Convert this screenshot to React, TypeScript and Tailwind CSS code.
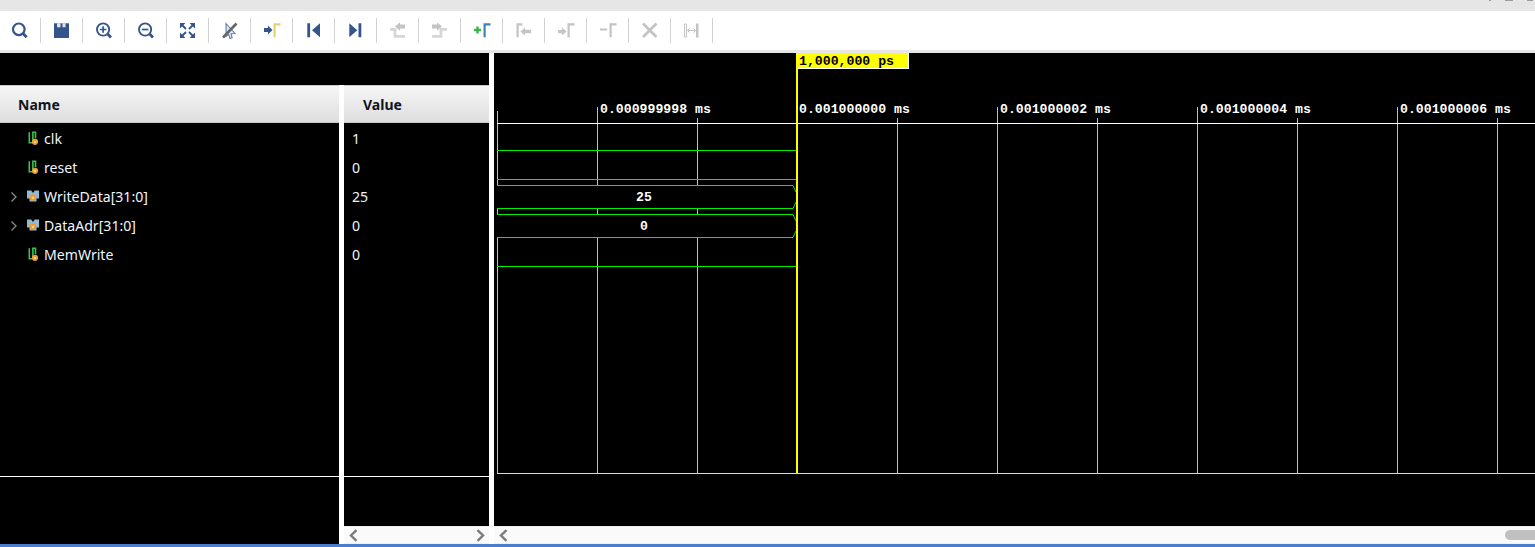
import type { ReactNode } from "react";

const BLUE = "#34558b";
const GRAY = "#c4c4c4";

// every toolbar icon sits on a 24x24 box centred in its button
function Glyph({ children }: { children: ReactNode }) {
  return (
    <svg width="24" height="24" viewBox="-0.5 -0.5 24 24" fill="none">
      {children}
    </svg>
  );
}

function Marker({ color, x = 14 }: { color: string; x?: number }) {
  return <path d={`M${x} 4.8h7v2.200h-4.800v11.800H${x}z`} fill={color} />;
}

const toolbarIcons: ReactNode[] = [
  <Glyph key="search">
    <circle cx="11.3" cy="10.8" r="5.8" stroke={BLUE} strokeWidth="2.200" />
    <path d="M15.500 15L19.200 18.800" stroke={BLUE} strokeWidth="2.800" />
  </Glyph>,
  <Glyph key="save">
    <path d="M4.500 4.800h15v14.700h-15z" fill={BLUE} />
    <path d="M7.500 4.800h3.500v4h-3.500zM13 4.800h3v4h-3z" fill="#dfe5ef" />
  </Glyph>,
  <Glyph key="zoom-in">
    <circle cx="11.600" cy="11" r="6.100" stroke={BLUE} strokeWidth="1.900" />
    <path d="M8.300 11h6.600M11.600 7.700v6.600" stroke={BLUE} strokeWidth="1.700" />
    <path d="M16.200 15.600L19.500 19" stroke={BLUE} strokeWidth="2.800" />
  </Glyph>,
  <Glyph key="zoom-out">
    <circle cx="11.600" cy="11" r="6.100" stroke={BLUE} strokeWidth="1.900" />
    <path d="M8.300 11h6.600" stroke={BLUE} strokeWidth="1.700" />
    <path d="M16.200 15.600L19.500 19" stroke={BLUE} strokeWidth="2.800" />
  </Glyph>,
  <Glyph key="fit">
    <path d="M4.500 4.500h5.500l-5.500 5.500zM19.500 4.500h-5.500l5.500 5.500zM4.500 19.500h5.500l-5.500-5.500zM19.500 19.500h-5.500l5.500-5.500z" fill={BLUE} />
    <path d="M6 6l4.500 4.500M18 6l-4.500 4.500M6 18l4.500-4.500M18 18l-4.500-4.500" stroke={BLUE} strokeWidth="1.800" />
  </Glyph>,
  <Glyph key="cursor">
    <path d="M8.500 5L17.500 15l-3.800.3.900 4-2.200.6-1.200-4-2.600 2z" fill="#dfe8f2" stroke="#5b7fae" strokeWidth="1.100" />
    <path d="M19 5L5.500 19" stroke="#666666" strokeWidth="2.600" />
  </Glyph>,
  <Glyph key="go-marker">
    <path d="M4.500 9.500h4V7l4.500 4.500L8.500 16v-2.500h-4z" fill={BLUE} />
    <Marker color="#e9d077" />
  </Glyph>,
  <Glyph key="start">
    <path d="M5.800 4.800h2.800v14H5.800zM18.500 4.800v14l-8-7z" fill={BLUE} />
  </Glyph>,
  <Glyph key="end">
    <path d="M5.800 4.800l8 7-8 7zM15 4.800h2.800v14H15z" fill={BLUE} />
  </Glyph>,
  <Glyph key="swap-up">
    <path d="M19.500 6h-5V3.800L9.500 8l5 4.200V10h5z" fill={GRAY} />
    <path d="M4.500 10.800H9.500V17.800H19.500" stroke="#d6d6d6" strokeWidth="2.800" />
  </Glyph>,
  <Glyph key="swap-down">
    <path d="M4.500 6h5V3.800l5 4.200-5 4.200V10h-5z" fill={GRAY} />
    <path d="M4.500 17.800H13.500V10.800H19.500" stroke="#d6d6d6" strokeWidth="2.800" />
  </Glyph>,
  <Glyph key="add-marker">
    <path d="M4.500 11.500h7M8 8v7" stroke="#3fb24a" strokeWidth="2.400" />
    <Marker color="#3f83b8" />
  </Glyph>,
  <Glyph key="prev-marker">
    <path d="M5 4.800h6v2.200H7.200v11.800H5z" fill={GRAY} />
    <path d="M9 13l4.500-4v2.200h6v3.600h-6V17z" fill={GRAY} />
  </Glyph>,
  <Glyph key="next-marker">
    <path d="M4.500 11.500h4V9l4.500 4-4.500 4v-2.200h-4z" fill={GRAY} />
    <Marker color={GRAY} />
  </Glyph>,
  <Glyph key="remove-marker">
    <path d="M4.500 11h7.200" stroke={GRAY} strokeWidth="2" />
    <Marker color={GRAY} />
  </Glyph>,
  <Glyph key="remove-all">
    <path d="M5.500 5l13.500 13.500M19 5L5.500 18.500" stroke={GRAY} strokeWidth="2.800" />
  </Glyph>,
  <Glyph key="span">
    <path d="M5 5.500h2v13H5z" stroke={GRAY} strokeWidth="1" />
    <path d="M16.500 5H19v14h-2.500z" fill={GRAY} />
    <path d="M8 12h8M10 10l-2 2 2 2M14 10l2 2-2 2" stroke={GRAY} strokeWidth="1" />
  </Glyph>,
];

type Signal = { name: string; value: string; bus?: boolean };

const signals: Signal[] = [
  { name: "clk", value: "1" },
  { name: "reset", value: "0" },
  { name: "WriteData[31:0]", value: "25", bus: true },
  { name: "DataAdr[31:0]", value: "0", bus: true },
  { name: "MemWrite", value: "0" },
];

function SignalIcon({ bus }: { bus?: boolean }) {
  return (
    <svg width="14" height="16" viewBox="0 0 14 16" fill="none" className="shrink-0">
      {bus ? (
        <path d="M0 1.500h4.200l1.800 2.500 1.800-2.500H12v8H9.500v3h-7v-3H0z" fill="#8fbbd8" />
      ) : (
        <path d="M2.300 1.200v10.600h3.600V1.200h2.600v6" stroke="#3cc24f" strokeWidth="1.600" />
      )}
      <circle cx={bus ? 6 : 8} cy={bus ? 8.500 : 10.800} r={bus ? 3.300 : 3.100} fill="#ef9a2e" />
      <path d={bus ? "M4.900 7.600L6 9.800 7.100 7.600" : "M6.900 9.900L8 12.100 9.100 9.900"} stroke="#fff3dc" strokeWidth="0.800" />
    </svg>
  );
}

function HeaderCell({ label, pad }: { label: string; pad: string }) {
  return (
    <div className={`h-[38px] shrink-0 flex items-center ${pad} border-y border-[#c9c9c9] bg-gradient-to-b from-[#f6f6f6] to-[#dedee0] text-[14px] font-bold text-[#10141c]`}>
      {label}
    </div>
  );
}

function ScrollChevron({ right }: { right?: boolean }) {
  return (
    <svg width="9" height="13" viewBox="0 0 9 13" fill="none">
      <path d={right ? "M1.500 1.200L7 6.500l-5.500 5.300" : "M7.500 1.200L2 6.500l5.500 5.300"} stroke="#7b7b7b" strokeWidth="2.400" />
    </svg>
  );
}

// page coordinates minus the wave panel's origin (494, 53)
const px = (x: number) => x - 494;
const py = (y: number) => y - 53;

const majorTicks = [597, 997, 1197, 1397];
const minorTicks = [697, 897, 1097, 1297, 1497];
const rulerLabels = [
  { x: 600, text: "0.000999998 ms" },
  { x: 799, text: "0.001000000 ms" },
  { x: 1000, text: "0.001000002 ms" },
  { x: 1200, text: "0.001000004 ms" },
  { x: 1400, text: "0.001000006 ms" },
];
const digitalLines = [150, 179, 266];
const busRows = [
  { top: 185, bottom: 208, label: "25", base: 201 },
  { top: 214, bottom: 237, label: "0", base: 230 },
];

function WaveCanvas() {
  const mono = { fontFamily: '"Liberation Mono", monospace', fontWeight: 700, fontSize: 13.2 };
  return (
    <svg className="absolute inset-0" width="1041" height="473" viewBox="0 0 1041 473">
      <g shapeRendering="crispEdges">
        <path d={`M${px(497) + 0.5} ${py(111)}V${py(473)}`} stroke="#c0c0c0" />
        {majorTicks.map((x) => (
          <path key={x} d={`M${px(x) + 0.5} ${py(107)}V${py(473)}`} stroke="#c0c0c0" />
        ))}
        {minorTicks.map((x) => (
          <path key={x} d={`M${px(x) + 0.5} ${py(118)}V${py(473)}`} stroke="#c0c0c0" />
        ))}
        <path d={`M${px(497)} ${py(123) + 0.5}H1041`} stroke="#ffffff" />
        <path d={`M${px(497)} ${py(473) + 0.5}H1041`} stroke="#d8d8d8" />
        {digitalLines.map((y) => (
          <path key={y} d={`M${px(497)} ${py(y) + 0.5}H${px(797)}`} stroke="#00f000" />
        ))}
      </g>
      {busRows.map((row) => (
        <g key={row.label}>
          <rect x={px(497)} y={py(row.top)} width={300} height={row.bottom - row.top} fill="#000000" />
          <path
            d={`M${px(497)} ${py(row.top) + 0.5}H${px(793)}L${px(796)} ${py(row.top) + 7}M${px(796)} ${py(row.bottom) - 6}L${px(793)} ${py(row.bottom) + 0.5}H${px(497)}`}
            stroke="#00f000"
          />
          <text x={px(644)} y={py(row.base)} textAnchor="middle" fill="#ffffff" style={mono}>
            {row.label}
          </text>
        </g>
      ))}
      {rulerLabels.map((label) => (
        <text key={label.x} x={px(label.x)} y={py(113)} fill="#ffffff" style={mono}>
          {label.text}
        </text>
      ))}
      <g shapeRendering="crispEdges">
        <rect x={px(796)} y="0" width="2" height={py(473)} fill="#ffff00" />
        <rect x={px(797)} y="0" width="112" height="16" fill="#ffffff" />
        <rect x={px(797)} y="0" width="111" height="15" fill="#ffff00" />
      </g>
      <text x={px(799)} y={py(65)} fill="#000000" style={mono}>
        1,000,000 ps
      </text>
    </svg>
  );
}

export default function App() {
  return (
    <div className="w-[1535px] h-[547px] flex flex-col overflow-hidden bg-white font-['Noto_Sans','Open_Sans',sans-serif]">
      <div className="h-[11px] shrink-0 bg-[#e6e6e6] flex justify-end items-start gap-[14px] pr-[2px]">
        <div className="w-[2px] h-px bg-[#9a9a9a]" />
        <div className="w-[8px] h-px bg-[#9a9a9a]" />
        <div className="w-[6px] h-px bg-[#9a9a9a]" />
      </div>

      <div className="h-[39px] shrink-0 flex items-start -ml-px pt-[7px]">
        {toolbarIcons.map((icon, i) => (
          <div key={i} className="w-[42px] h-[25px] flex items-start pl-[8px] border-r border-[#d2d2d2]">
            {icon}
          </div>
        ))}
      </div>
      <div className="h-[3px] shrink-0 bg-[#e6e6e6]" />

      <div className="flex-1 min-h-0 flex gap-[5px]">
        <div className="w-[489px] shrink-0 flex flex-col">
          <div className="h-[32px] shrink-0 bg-black" />
          <div className="flex-1 min-h-0 flex gap-[5px]">
            <div className="w-[339px] shrink-0 bg-black flex flex-col">
              <HeaderCell label="Name" pad="pl-[18px]" />
              <div className="h-[353px] shrink-0 pt-px">
                {signals.map((s) => (
                  <div key={s.name} className="h-[29px] flex items-center text-[14.1px] text-[#eef4fb]">
                    <div className="w-[27px] shrink-0 flex justify-end pr-[9px]">
                      {s.bus && (
                        <svg width="8" height="12" viewBox="0 0 8 12" fill="none">
                          <path d="M1.500 1.500L6 6l-4.500 4.500" stroke="#8a8a8a" strokeWidth="1.300" />
                        </svg>
                      )}
                    </div>
                    <SignalIcon bus={s.bus} />
                    <span className="ml-[3px]">{s.name}</span>
                  </div>
                ))}
              </div>
              <div className="flex-1 border-t border-white" />
            </div>

            <div className="w-[145px] shrink-0 flex flex-col">
              <div className="flex-1 min-h-0 bg-black flex flex-col">
                <HeaderCell label="Value" pad="pl-[19px]" />
                <div className="h-[353px] shrink-0 pt-px">
                  {signals.map((s) => (
                    <div key={s.name} className="h-[29px] flex items-center pl-[8px] text-[14.1px] text-[#eef4fb]">
                      {s.value}
                    </div>
                  ))}
                </div>
                <div className="flex-1 border-t border-white" />
              </div>
              <div className="h-[18px] shrink-0 bg-[#fafafa] border-y border-[#efefef] flex items-center justify-between pl-[5px] pr-[4px]">
                <ScrollChevron />
                <ScrollChevron right />
              </div>
            </div>
          </div>
        </div>

        <div className="flex-1 min-w-0 flex flex-col">
          <div className="flex-1 min-h-0 bg-black relative">
            <WaveCanvas />
          </div>
          <div className="h-[18px] shrink-0 bg-[#fafafa] border-y border-[#efefef] flex items-center justify-between pl-[5px]">
            <ScrollChevron />
            <div className="w-[30px] h-[10px] rounded-l-full bg-[#c0c0c0]" />
          </div>
        </div>
      </div>

      <div className="h-[3px] shrink-0 bg-[#4a7dcc]" />
    </div>
  );
}
